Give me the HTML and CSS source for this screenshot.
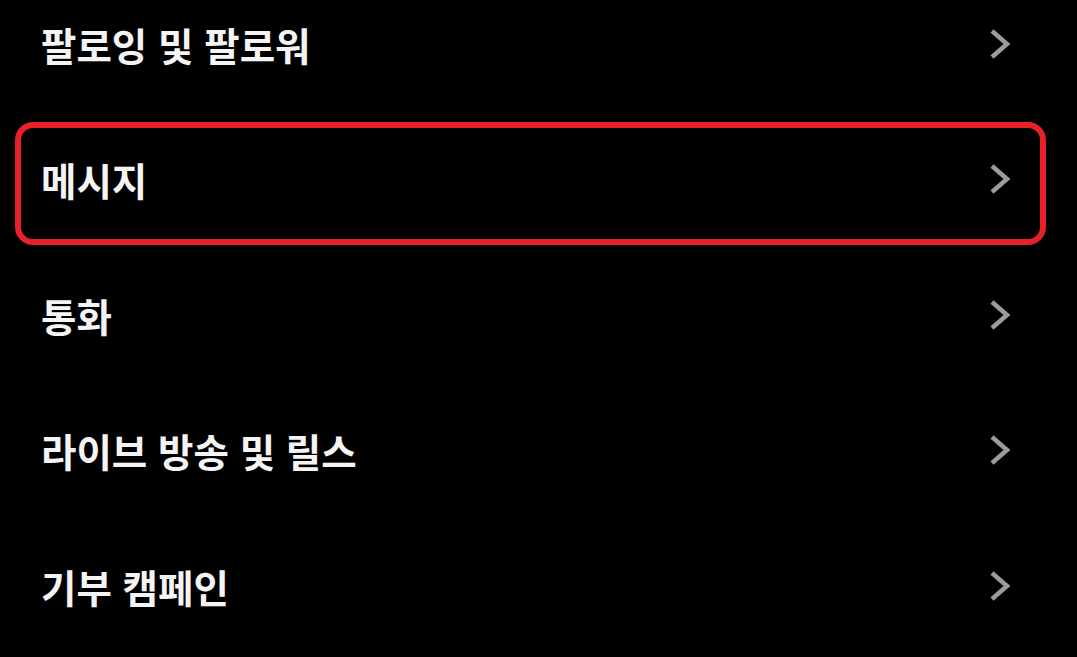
FILE: index.html
```html
<!DOCTYPE html>
<html lang="ko">
<head>
<meta charset="utf-8">
<link rel="stylesheet" href="styles.css">
</head>
<body>
<ul class="menu">
  <li class="item"><span class="label">팔로잉 및 팔로워</span><svg class="chev" viewBox="0 0 22 32"><path d="M3 3 L18 16 L3 29"/></svg></li>
  <li class="item highlighted"><span class="label">메시지</span><svg class="chev" viewBox="0 0 22 32"><path d="M3 3 L18 16 L3 29"/></svg></li>
  <li class="item"><span class="label">통화</span><svg class="chev" viewBox="0 0 22 32"><path d="M3 3 L18 16 L3 29"/></svg></li>
  <li class="item"><span class="label">라이브 방송 및 릴스</span><svg class="chev" viewBox="0 0 22 32"><path d="M3 3 L18 16 L3 29"/></svg></li>
  <li class="item"><span class="label">기부 캠페인</span><svg class="chev" viewBox="0 0 22 32"><path d="M3 3 L18 16 L3 29"/></svg></li>
</ul>
</body>
</html>
```
FILE: styles.css
```css
html, body {
  margin: 0;
  padding: 0;
  background: #000;
  overflow: hidden;
}
body {
  width: 1077px;
  height: 657px;
  font-family: "Noto Sans CJK KR", "Noto Sans", sans-serif;
}
.menu {
  list-style: none;
  margin: -24px 0 0 0;
  padding: 0;
}
.item {
  position: relative;
  height: 135.5px;
  display: flex;
  align-items: center;
  justify-content: space-between;
  padding: 0 66px 0 41px;
}
.label {
  color: #f4f4f4;
  font-size: 38.5px;
  font-weight: 700;
  line-height: 1;
}
.chev {
  width: 22px;
  height: 32px;
}
.chev path {
  fill: none;
  stroke: #9c9c9c;
  stroke-width: 4.5;
  stroke-linecap: butt;
  stroke-linejoin: miter;
}
.highlighted::after {
  content: "";
  position: absolute;
  left: 15px;
  right: 31px;
  top: 10.5px;
  bottom: 2px;
  border: 6px solid #e8202a;
  border-radius: 18px;
  box-sizing: border-box;
}
```
